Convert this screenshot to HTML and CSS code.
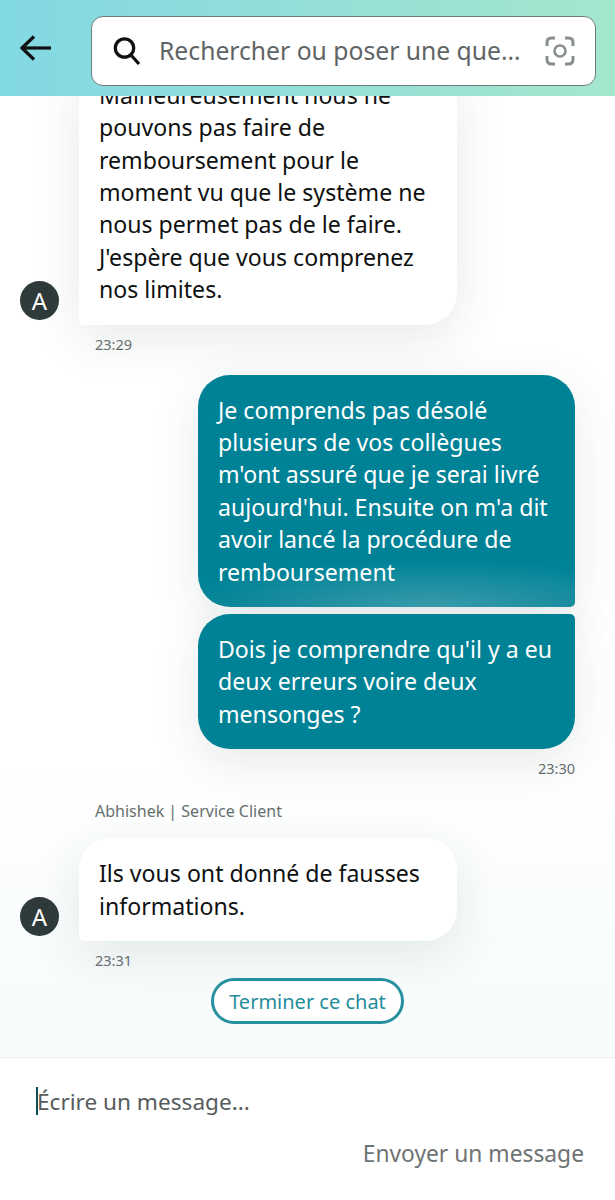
FILE: index.html
```html
<!DOCTYPE html>
<html lang="fr">
<head>
    <meta charset="UTF-8">
    <title>Service Client</title>
    <link rel="stylesheet" href="styles.css">
</head>
<body>

    <header class="topbar">
        <svg class="back" width="34" height="28" viewBox="0 0 34 28" fill="none" stroke="#111" stroke-width="3.2">
            <path d="M33 14H4"/>
            <path d="M16 2.500L4 14L16 25.500"/>
        </svg>
        <div class="search">
            <svg class="search-icon" width="28" height="30" viewBox="0 0 28 30" fill="none" stroke="#111" stroke-width="3.2">
                <circle cx="11.500" cy="12" r="9.200"/>
                <path d="M18 19L26 28"/>
            </svg>
            <span class="search-text">Rechercher ou poser une que…</span>
            <svg class="lens" width="30" height="30" viewBox="0 0 30 30" fill="none" stroke="#87908f" stroke-width="3">
                <path d="M2 10V6.500Q2 2 6.500 2H10"/>
                <path d="M20 2H23.500Q28 2 28 6.500V10"/>
                <path d="M28 20V23.500Q28 28 23.500 28H20"/>
                <path d="M10 28H6.500Q2 28 2 23.500V20"/>
                <circle cx="15" cy="15" r="5.500" stroke-width="2.600"/>
            </svg>
        </div>
    </header>

    <main class="chat">
        <div class="row">
            <div class="avatar">A</div>
            <div class="bubble agent">Malheureusement nous ne pouvons pas faire de remboursement pour le moment vu que le système ne nous permet pas de le faire. J'espère que vous comprenez nos limites.</div>
        </div>
        <div class="time time-agent">23:29</div>

        <div class="bubble me me-first">Je comprends pas désolé plusieurs de vos collègues m'ont assuré que je serai livré aujourd'hui. Ensuite on m'a dit avoir lancé la procédure de remboursement</div>
        <div class="bubble me me-last">Dois je comprendre qu'il y a eu deux erreurs voire deux mensonges ?</div>
        <div class="time time-me">23:30</div>

        <div class="sender">Abhishek | Service Client</div>
        <div class="row">
            <div class="avatar">A</div>
            <div class="bubble agent">Ils vous ont donné de fausses informations.</div>
        </div>
        <div class="time time-agent">23:31</div>

        <button class="end-chat">Terminer ce chat</button>
    </main>

    <footer class="composer">
        <div class="input"><span class="caret"></span>Écrire un message...</div>
        <div class="send">Envoyer un message</div>
    </footer>

</body>
</html>
```

FILE: styles.css
```css
* {
    box-sizing: border-box;
}

body {
    margin: 0;
    height: 1200px;
    overflow: hidden;
    display: flex;
    flex-direction: column;
    font-family: "Noto Sans", sans-serif;
    color: #0f1111;
    background: #fff;
}

.topbar {
    height: 96px;
    flex-shrink: 0;
    display: flex;
    align-items: center;
    padding: 0 19px 0 18px;
    gap: 39px;
    background: linear-gradient(90deg, #82d8e3, #a5e6cd);
    position: relative;
    z-index: 1;
}

.back {
    flex-shrink: 0;
}

.search {
    flex: 1;
    height: 70px;
    margin-top: 6px;
    display: flex;
    align-items: center;
    padding: 0 20px 0 21px;
    background: #fff;
    border: 1px solid #6f7c7c;
    border-radius: 12px;
    min-width: 0;
}

.search-icon {
    flex-shrink: 0;
}

.search-text {
    flex: 1;
    margin: 0 0 2px 18px;
    font-size: 24.700px;
    color: #5f6464;
    white-space: nowrap;
}

.chat {
    flex: 1;
    min-height: 0;
    overflow: hidden;
    display: flex;
    flex-direction: column;
    justify-content: flex-end;
    padding: 0 40px 33px 20px;
    background: linear-gradient(180deg, #fff 70%, #f6fbfc);
}

.row {
    display: flex;
    align-items: flex-end;
    gap: 20px;
    flex-shrink: 0;
}

.avatar {
    width: 39px;
    height: 39px;
    flex-shrink: 0;
    margin-bottom: 5px;
    display: flex;
    align-items: center;
    justify-content: center;
    border-radius: 50%;
    background: #2f3b3b;
    color: #fff;
    font-size: 24px;
}

.bubble {
    width: 378px;
    flex-shrink: 0;
    padding: 19px 20px 19px;
    font-size: 23.100px;
    line-height: 32.400px;
    border-radius: 32px;
    box-shadow: 0 14px 50px rgba(40, 60, 60, 0.11);
}

.agent {
    background: #fff;
    border-bottom-left-radius: 5px;
}

.me {
    width: 377px;
    align-self: flex-end;
    background: #008296;
    color: #fff;
}

.me-first {
    margin-top: 22px;
    border-bottom-right-radius: 5px;
    background: radial-gradient(ellipse 70% 20% at 62% 100%, #3a9dad, transparent), #008296;
}

.me-last {
    margin-top: 7px;
    border-top-right-radius: 5px;
}

.time {
    font-size: 14.500px;
    line-height: 18px;
    color: #666d6d;
    flex-shrink: 0;
}

.time-agent {
    margin: 10px 0 0 75px;
}

.time-me {
    align-self: flex-end;
    margin-top: 10px;
}

.sender {
    margin: 23px 0 16px 75px;
    font-size: 16px;
    line-height: 22px;
    color: #68706f;
    flex-shrink: 0;
}

.end-chat {
    align-self: center;
    flex-shrink: 0;
    width: 193px;
    height: 46px;
    margin: 9px 0 0 20px;
    padding: 0;
    background: #fff;
    border: 3px solid #26909f;
    border-radius: 23px;
    color: #1f8c9b;
    font-family: inherit;
    font-size: 20px;
}

.composer {
    height: 143px;
    flex-shrink: 0;
    padding: 28px 31px 0 36px;
    background: #fff;
    border-top: 1px solid #eceeee;
}

.input {
    display: flex;
    align-items: center;
    height: 30px;
    font-size: 22.600px;
    color: #565c5c;
}

.caret {
    width: 2px;
    height: 28px;
    margin-right: -1px;
    background: #0f4f58;
}

.send {
    margin-top: 22px;
    text-align: right;
    font-size: 22.800px;
    line-height: 32px;
    color: #6f7373;
}
```
